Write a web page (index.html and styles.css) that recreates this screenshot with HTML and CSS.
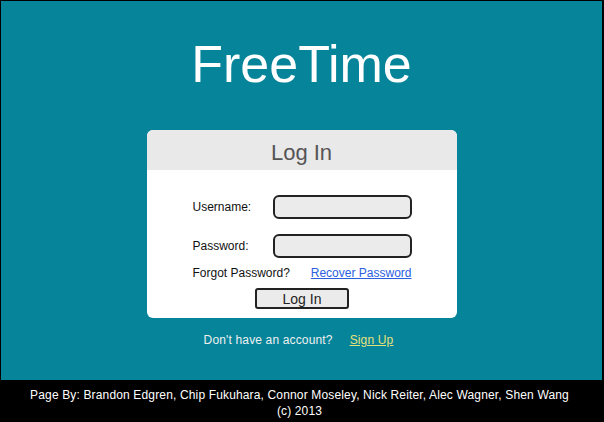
FILE: index.html
```html
<!DOCTYPE html>
<html>
<head>
<meta charset="utf-8">
<title>FreeTime</title>
<link rel="stylesheet" href="styles.css">
</head>
<body>
<div class="main">
  <h1 class="title">FreeTime</h1>
  <div class="card">
    <div class="card-head">Log In</div>
    <div class="card-body">
      <div class="field">
        <label class="label">Username:</label>
        <div class="input"></div>
      </div>
      <div class="field">
        <label class="label">Password:</label>
        <div class="input"></div>
      </div>
      <div class="forgot">
        <span>Forgot Password?</span>
        <a class="link" href="#">Recover Password</a>
      </div>
      <div class="btn-row"><button class="btn">Log In</button></div>
    </div>
  </div>
  <div class="signup">
    <span>Don't have an account?</span>
    <a class="signup-link" href="#">Sign Up</a>
  </div>
</div>
<footer class="footer">
  <div>Page By: Brandon Edgren, Chip Fukuhara, Connor Moseley, Nick Reiter, Alec Wagner, Shen Wang</div>
  <div>(c) 2013</div>
</footer>
</body>
</html>
```

FILE: styles.css
```css
html, body {
  margin: 0;
  padding: 0;
  background: #000;
  font-family: "Liberation Sans", Arial, sans-serif;
}
.main {
  margin: 1px 2px 0 1px;
  height: 379px;
  background: #05849a;
  display: flex;
  flex-direction: column;
  align-items: center;
}
.title {
  margin: 33px 0 36px;
  font-size: 52px;
  line-height: 60px;
  font-weight: normal;
  color: #fff;
}
.card {
  width: 310px;
  background: #fff;
  border-radius: 6px;
  overflow: hidden;
}
.card-head {
  background: #e9e9e9;
  height: 40px;
  box-sizing: border-box;
  padding-top: 10px;
  text-align: center;
  font-size: 22px;
  line-height: 26px;
  color: #555;
}
.card-body {
  padding: 25px 45px 9px 46px;
  display: flex;
  flex-direction: column;
}
.field {
  display: grid;
  grid-template-columns: 80px 1fr;
  align-items: center;
  height: 24px;
}
.field + .field {
  margin-top: 15px;
}
.label {
  font-size: 12px;
  line-height: 14px;
  color: #111;
}
.input {
  height: 24px;
  box-sizing: border-box;
  border: 2px solid #222;
  border-radius: 6px;
  background: #ebebeb;
}
.forgot {
  margin-top: 8px;
  display: flex;
  justify-content: space-between;
  font-size: 12px;
  line-height: 14px;
  color: #111;
}
.link {
  color: #2b5fe0;
  text-decoration: underline;
}
.btn-row {
  margin-top: 8px;
  display: flex;
  justify-content: center;
}
.btn {
  width: 94px;
  height: 21px;
  box-sizing: border-box;
  border: 2px solid #222;
  border-radius: 3px;
  background: #ebebeb;
  font-family: "Liberation Sans", Arial, sans-serif;
  font-size: 14px;
  line-height: 16px;
  color: #222;
  padding: 0;
}
.signup {
  margin-top: 15px;
  margin-left: -6px;
  display: flex;
  gap: 17px;
  font-size: 12px;
  line-height: 14px;
  letter-spacing: 0.15px;
  color: #f0f0f0;
}
.signup-link {
  color: #e6e07a;
  text-decoration: underline;
}
.footer {
  padding: 7px 5px 0 0;
  text-align: center;
  font-size: 12px;
  line-height: 16px;
  letter-spacing: 0.15px;
  color: #fff;
}
```
